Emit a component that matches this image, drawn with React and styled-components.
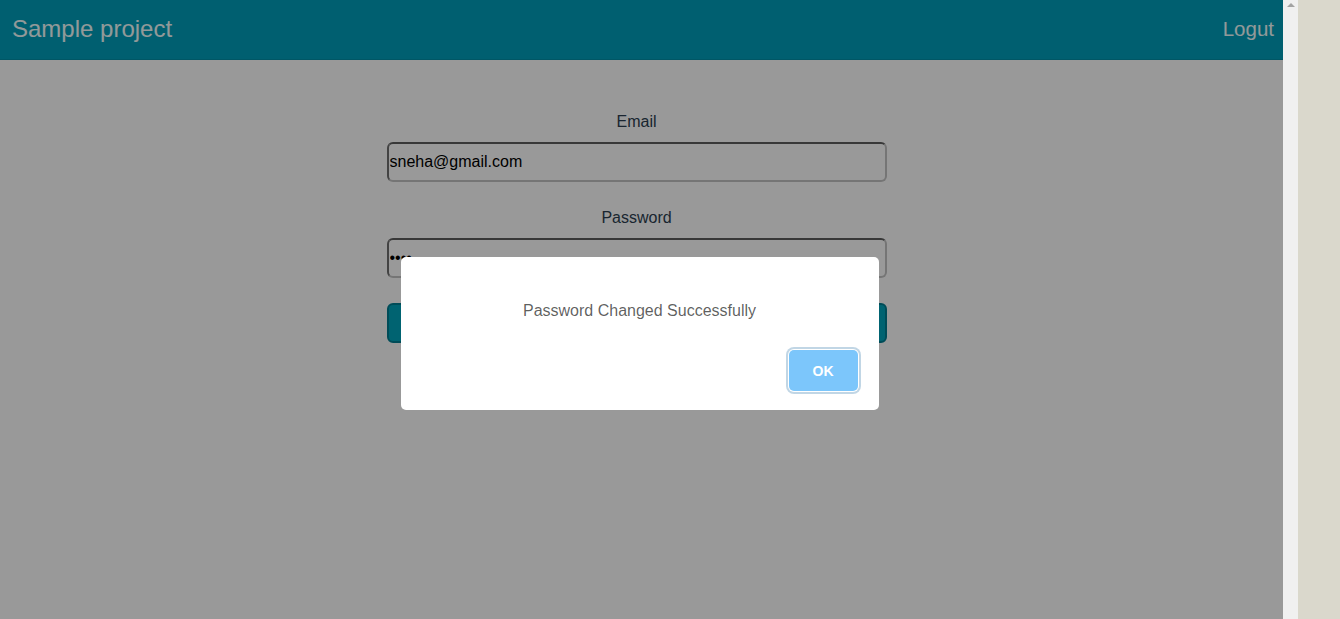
import styled, { createGlobalStyle } from "styled-components";

const GlobalStyle = createGlobalStyle`
  html, body {
    margin: 0;
    padding: 0;
    height: 100%;
    overflow: hidden;
  }
  body {
    font-family: "Liberation Sans", Arial, sans-serif;
    background: #dad8cc;
  }
  #root {
    height: 100%;
  }
`;

const Frame = styled.div`
  display: flex;
  height: 619px;
  width: 1340px;
`;

const Page = styled.div`
  position: relative;
  width: 1283px;
  height: 100%;
  background: #ffffff;
  overflow: hidden;
`;

const Scrollbar = styled.div`
  width: 15px;
  height: 100%;
  background: #f0f0f0;
  display: flex;
  justify-content: center;
  padding-top: 3px;
  box-sizing: border-box;
`;

const Arrow = styled.div`
  width: 0;
  height: 0;
  border-left: 4px solid transparent;
  border-right: 4px solid transparent;
  border-bottom: 4px solid #a3a3a3;
`;

const Header = styled.header`
  height: 59px;
  background: #009fbb;
  border-bottom: 1px solid #0090a8;
  display: flex;
  align-items: center;
  justify-content: space-between;
  padding: 0 9px 0 12px;
  color: #f4ffff;
`;

const Title = styled.div`
  font-size: 24px;
  margin-top: -2px;
`;

const Logout = styled.a`
  font-size: 20.5px;
  margin-top: -2px;
  cursor: pointer;
`;

const Form = styled.form`
  width: 500px;
  margin: 51px auto 0;
  position: relative;
  left: -5px;
  display: flex;
  flex-direction: column;
  align-items: stretch;
`;

const Label = styled.label`
  text-align: center;
  font-size: 16px;
  color: #2c3e50;
  line-height: 18px;
  margin: 2px 0 11px;
`;

const Input = styled.input`
  height: 40px;
  box-sizing: border-box;
  border: 2px solid #8f8f8f;
  border-top-color: #5e5e5e;
  border-left-color: #707070;
  border-bottom-color: #c4c4c4;
  border-right-color: #c4c4c4;
  border-radius: 6px;
  padding: 0 1px;
  font-family: "Liberation Sans", Arial, sans-serif;
  font-size: 16px;
  color: #000;
  background: #fff;
  margin-bottom: 25px;
`;

const SubmitButton = styled.button`
  height: 40px;
  border: 2px solid #007f93;
  border-radius: 6px;
  background: #00a6bd;
  color: #fff;
  font-size: 16px;
`;

const Backdrop = styled.div`
  position: absolute;
  inset: 0;
  background: rgba(0, 0, 0, 0.4);
  display: flex;
  justify-content: center;
  align-items: flex-start;
  padding: 257px 4px 0 0;
  box-sizing: border-box;
`;

const Modal = styled.div`
  width: 478px;
  height: 153px;
  background: #fff;
  border-radius: 5px;
  box-sizing: border-box;
  display: flex;
  flex-direction: column;
`;

const ModalText = styled.div`
  margin-top: 45px;
  padding: 0 10px;
  text-align: center;
  font-size: 16px;
  line-height: 18px;
  color: rgba(0, 0, 0, 0.64);
`;

const ModalFooter = styled.div`
  display: flex;
  justify-content: flex-end;
  padding: 0 21px 0 0;
  margin-top: 30px;
`;

const OkButton = styled.button`
  width: 69px;
  height: 41px;
  border: none;
  border-radius: 5px;
  background: #7cc6fb;
  color: #fff;
  font-family: "Liberation Sans", Arial, sans-serif;
  font-weight: 700;
  font-size: 14px;
  box-shadow: 0 0 0 1px #fff, 0 0 0 3px rgba(43, 114, 165, 0.29);
  cursor: pointer;
`;

export default function App() {
  return (
    <>
      <GlobalStyle />
      <Frame>
        <Page>
          <Header>
            <Title>Sample project</Title>
            <Logout>Logut</Logout>
          </Header>
          <Form onSubmit={(e) => e.preventDefault()}>
            <Label>Email</Label>
            <Input type="email" defaultValue="sneha@gmail.com" />
            <Label>Password</Label>
            <Input type="password" defaultValue="1234" />
            <SubmitButton type="submit" aria-label="Change Password" />
          </Form>
          <Backdrop>
            <Modal>
              <ModalText>Password Changed Successfully</ModalText>
              <ModalFooter>
                <OkButton>OK</OkButton>
              </ModalFooter>
            </Modal>
          </Backdrop>
        </Page>
        <Scrollbar>
          <Arrow />
        </Scrollbar>
      </Frame>
    </>
  );
}
